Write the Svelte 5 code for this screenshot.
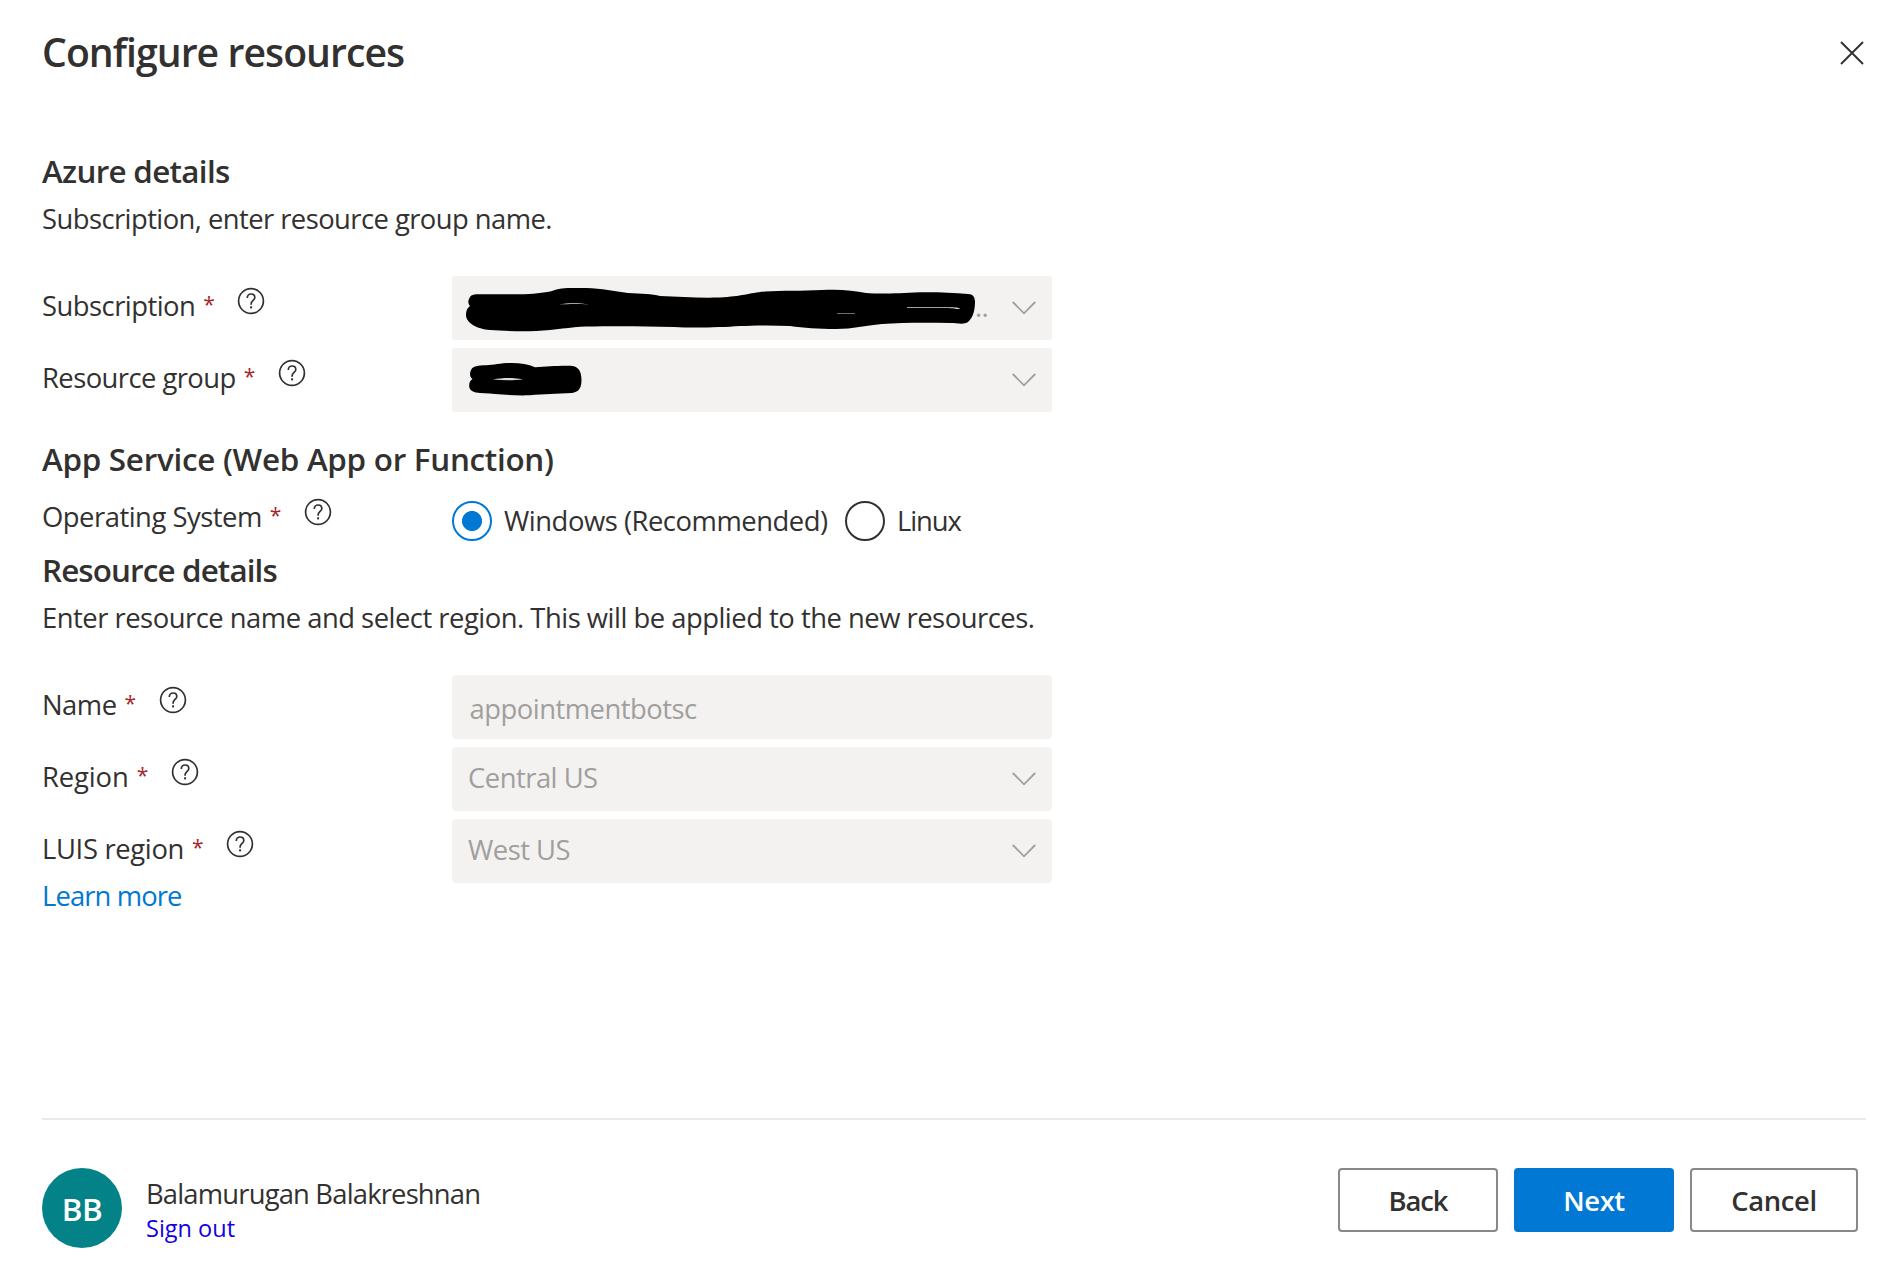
<script>
  let os = $state('windows');
</script>

{#snippet label(text, kind)}
  <div class="label">
    <span class="label-text {kind}">{text}</span>
    <span class="required">*</span>
    <svg class="help" viewBox="0 0 28 28" width="28" height="28" aria-label="Help">
      <circle cx="14" cy="14" r="12.4" />
      <path d="M10.3 10.9C10.3 8.5 11.9 7 14.1 7C16.3 7 17.8 8.4 17.8 10.4C17.8 13.4 14.1 13.6 14.1 17.1V17.7" />
      <rect x="13.1" y="19.3" width="2" height="2.1" />
    </svg>
  </div>
{/snippet}

{#snippet chevron()}
  <svg class="chevron" viewBox="0 0 26 16" width="26" height="16">
    <path d="M1.8 2L13 13.3L24.2 2" />
  </svg>
{/snippet}

<div class="dialog">
  <header>
    <h1>Configure resources</h1>
    <button class="close" aria-label="Close">
      <svg viewBox="0 0 26 26" width="26" height="26"><path d="M2 2L24 24M24 2L2 24" /></svg>
    </button>
  </header>

  <main>
    <h2 class="azure">Azure details</h2>
    <p class="intro">Subscription, enter resource group name.</p>

    <div class="row">
      {@render label('Subscription', 'subscription')}
      <div class="field">
        <svg class="scribble" viewBox="0 0 512 64" width="512" height="64">
          <path d="M17 23C18 20 20 18.5 24 18.3L68 18.3C80 18 92 17 100 15C108 11 122 12 134 12C150 12.5 162 15 176 17C190 17.5 200 18 208 20C228 21 246 22 268 21.5C290 20.5 298 17 313 15.5C330 14.5 350 15 370 14C388 13 402 14.5 414 17C432 18.3 446 17 468 16.2C485 16 500 16.5 516 18C521 18 523 21 523 26C523 34 521 42 516 46C512 49 505 47 498 47C474 46.5 450 46.5 430 48C412 49.5 402 53 384 53C366 53 352 52 338 50C320 49 300 49.5 288 50C268 51.5 240 52 222 51C190 50 160 50 134 50.5C118 51 104 54 84 55C68 55.5 52 55 38 54C25 53 14 47 14 39C14 35 15 32 18 30C16 28 16 25 17 23Z" />
          <path class="gap" d="M107 28.6C115 26.8 127 26.6 137 28.6C127 27.8 116 28 107 28.6ZM385 37.4L403 37.2L403 37.8L385 37.9ZM455 31.2L501 31.2C506 31.6 508 32 508 33L505 33C502 31.9 490 31.9 455 31.9Z" />
        </svg>
        <span class="overflow">..</span>
        {@render chevron()}
      </div>
    </div>
    <div class="row">
      {@render label('Resource group', 'group')}
      <div class="field">
        <svg class="scribble" viewBox="0 0 512 64" width="512" height="64">
          <path d="M19 22C21 18 26 17.4 34 17.3C42 17 48 15.2 58 15.1C68 15 76 16 83 19.2C95 18.6 104 17.5 118 17.7C127 18 130 24 129.4 34C129 41 126 44 120 45C104 46 92 46 78 47.3C66 47.8 54 47 43 46C36 45 29 45.6 24 44.5C18 43 17 40 17.2 37C17.4 34 18 33 20.5 31C17.5 29 17.5 25 19 22Z" />
          <path class="gap" d="M41 31.6C51 29.6 62 29.6 71 31.6C62 32.6 51 32.6 41 31.6Z" />
        </svg>
        {@render chevron()}
      </div>
    </div>

    <h2 class="service">App Service (Web App or Function)</h2>
    <div class="row system">
      {@render label('Operating System', 'os')}
      <div class="radios">
        <label class="radio windows">
          <input type="radio" value="windows" bind:group={os} />
          <span>Windows (Recommended)</span>
        </label>
        <label class="radio linux">
          <input type="radio" value="linux" bind:group={os} />
          <span>Linux</span>
        </label>
      </div>
    </div>

    <h2 class="details">Resource details</h2>
    <p class="intro long">Enter resource name and select region. This will be applied to the new resources.</p>

    <div class="row">
      {@render label('Name', 'name')}
      <div class="field"><span class="value input">appointmentbotsc</span></div>
    </div>
    <div class="row">
      {@render label('Region', 'region')}
      <div class="field"><span class="value">Central US</span>{@render chevron()}</div>
    </div>
    <div class="row">
      {@render label('LUIS region', 'luis')}
      <div class="field"><span class="value">West US</span>{@render chevron()}</div>
    </div>
    <a class="learn" href="#learn">Learn more</a>
  </main>

  <footer>
    <div class="avatar">BB</div>
    <div class="account">
      <div class="person">Balamurugan Balakreshnan</div>
      <a class="signout" href="#signout">Sign out</a>
    </div>
    <div class="actions">
      <button class="btn back">Back</button>
      <button class="btn primary">Next</button>
      <button class="btn cancel">Cancel</button>
    </div>
  </footer>
</div>

<style>
  :global(body) { background: #fff; }
  .dialog {
    box-sizing: border-box;
    height: 1274px;
    padding: 23px 15px 0 42px;
    display: flex;
    flex-direction: column;
    font-family: 'Open Sans', 'Noto Sans', sans-serif;
    font-size: 27.4px;
    line-height: 40px;
    letter-spacing: -0.5px;
    color: #323130;
    white-space: nowrap;
    overflow: hidden;
  }
  header { display: flex; justify-content: space-between; height: 126px; }
  h1 { margin: 0; font-size: 39.2px; font-weight: 600; line-height: 58px; letter-spacing: -0.96px; }
  .close { border: 0; padding: 0; margin: 17px 1px 0 0; width: 26px; height: 26px; background: none; }
  .close svg { display: block; fill: none; stroke: #323130; stroke-width: 1.9; }

  main { flex: 1; }
  h2 { margin: 0; font-size: 31.4px; font-weight: 600; line-height: 44px; letter-spacing: -0.69px; }
  .service { margin-top: 25px; letter-spacing: -0.28px; }
  .details { letter-spacing: -0.88px; }
  .intro { margin: 6px 0 37px; letter-spacing: -0.56px; }
  .long { margin: 6px 0 37px; letter-spacing: -0.495px; }

  .row { display: grid; grid-template-columns: 410px 600px; height: 64px; margin-bottom: 8px; }
  .row:has(+ h2), .row:has(+ .learn) { margin-bottom: 0; }
  .label { display: flex; align-items: flex-start; padding-top: 10px; }
  .subscription { letter-spacing: -0.52px; }
  .group { letter-spacing: -0.56px; }
  .os { letter-spacing: -0.49px; }
  .name { letter-spacing: -0.5px; }
  .region { letter-spacing: -0.12px; }
  .luis { letter-spacing: -0.33px; }
  .required { width: 12px; margin-left: 8px; font-size: 21px; line-height: 37px; color: #a4262c; letter-spacing: 0; }
  .help { margin: 1px 0 0 22px; fill: none; stroke: #323130; stroke-width: 1.7; }
  .help rect { fill: #323130; stroke: none; }

  .field {
    position: relative;
    display: flex;
    align-items: center;
    justify-content: space-between;
    background: #f3f2f1;
    border-radius: 4px;
    padding: 0 15px 0 16px;
    color: #a19f9d;
  }
  .chevron { fill: none; stroke: #a19f9d; stroke-width: 1.8; margin-left: auto; }
  .scribble { position: absolute; left: 0; top: 0; overflow: visible; fill: #000; }
  .gap { fill: #d8d8d8; }
  .overflow { margin-left: 507px; padding-bottom: 2px; letter-spacing: -0.6px; }
  .value { padding-bottom: 2px; letter-spacing: -0.5px; }
  .input { padding: 4px 0 0 1.5px; }

  .system { height: 56px; margin-top: 11px; }
  .system .label { padding-top: 5px; }
  .radios { display: flex; padding-top: 9px; }
  .radio { display: flex; height: 40px; line-height: 40px; letter-spacing: -0.469px; }
  .radio input {
    appearance: none;
    box-sizing: border-box;
    width: 40px;
    height: 40px;
    margin: 0 12px 0 0;
    border: 2px solid #323130;
    border-radius: 50%;
  }
  .radio input:checked {
    border-color: #0078d4;
    background: radial-gradient(circle, #0078d4 9.6px, transparent 10.4px);
  }
  .windows { width: 393px; }
  .linux { letter-spacing: -1.1px; }

  .learn { display: block; line-height: 26px; letter-spacing: -0.88px; color: #0078d4; text-decoration: none; }

  footer {
    box-sizing: border-box;
    height: 156px;
    border-top: 2px solid #eaeaea;
    padding-top: 48px;
    display: flex;
    align-items: flex-start;
  }
  .avatar {
    width: 80px;
    height: 80px;
    border-radius: 50%;
    background: #038387;
    color: #fff;
    font-size: 31.4px;
    font-weight: 600;
    line-height: 81px;
    text-align: center;
  }
  .account { padding: 6px 0 0 24px; }
  .person { letter-spacing: -0.82px; }
  .signout { display: block; font-size: 23.5px; line-height: 28px; letter-spacing: 0; color: #1200e6; text-decoration: none; }
  .actions { display: flex; gap: 16px; margin-left: auto; padding-right: 8px; }
  .btn {
    box-sizing: border-box;
    width: 160px;
    height: 64px;
    padding: 2px 0 0;
    border: 2px solid #8a8886;
    border-radius: 4px;
    background: #fff;
    color: #323130;
    font: 600 27.4px/58px 'Open Sans', 'Noto Sans', sans-serif;
    letter-spacing: -0.4px;
  }
  .back { letter-spacing: -1.1px; }
  .primary { border-color: #0078d4; background: #0078d4; color: #fff; }
  .cancel { width: 168px; }
</style>
